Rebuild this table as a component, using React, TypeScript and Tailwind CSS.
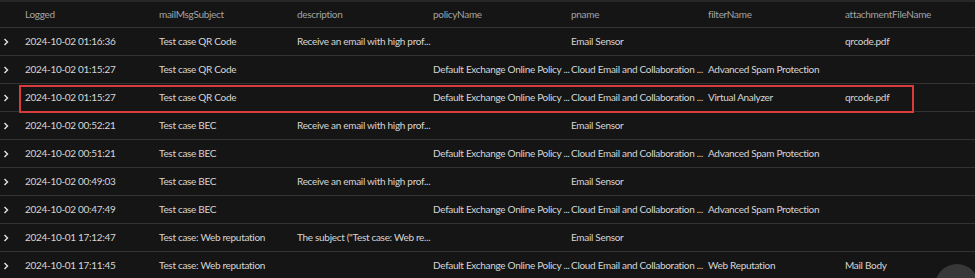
const columns = [
  { key: "logged", label: "Logged", w: "w-[134px]" },
  { key: "subject", label: "mailMsgSubject", w: "w-[138px]" },
  { key: "description", label: "description", w: "w-[136px]" },
  { key: "policy", label: "policyName", w: "w-[138px]" },
  { key: "pname", label: "pname", w: "w-[137px]" },
  { key: "filter", label: "filterName", w: "w-[137px]" },
  { key: "attachment", label: "attachmentFileName", w: "w-[134px]" },
];

type Row = Record<string, string>;

const POLICY = "Default Exchange Online Policy ...";
const CLOUD = "Cloud Email and Collaboration ...";

const rows: Row[] = [
  { logged: "2024-10-02 01:16:36", subject: "Test case QR Code", description: "Receive an email with high prof...", pname: "Email Sensor", attachment: "qrcode.pdf" },
  { logged: "2024-10-02 01:15:27", subject: "Test case QR Code", policy: POLICY, pname: CLOUD, filter: "Advanced Spam Protection" },
  { logged: "2024-10-02 01:15:27", subject: "Test case QR Code", policy: POLICY, pname: CLOUD, filter: "Virtual Analyzer", attachment: "qrcode.pdf" },
  { logged: "2024-10-02 00:52:21", subject: "Test case BEC", description: "Receive an email with high prof...", pname: "Email Sensor" },
  { logged: "2024-10-02 00:51:21", subject: "Test case BEC", policy: POLICY, pname: CLOUD, filter: "Advanced Spam Protection" },
  { logged: "2024-10-02 00:49:03", subject: "Test case BEC", description: "Receive an email with high prof...", pname: "Email Sensor" },
  { logged: "2024-10-02 00:47:49", subject: "Test case BEC", policy: POLICY, pname: CLOUD, filter: "Advanced Spam Protection" },
  { logged: "2024-10-01 17:12:47", subject: "Test case: Web reputation", description: "The subject (\"Test case: Web re...", pname: "Email Sensor" },
  { logged: "2024-10-01 17:11:45", subject: "Test case: Web reputation", policy: POLICY, pname: CLOUD, filter: "Web Reputation", attachment: "Mail Body" },
];

function Chevron() {
  return (
    <svg width="6" height="8" viewBox="0 0 6 8" className="text-[#e6e6e6]">
      <path d="M1.5 1 L4.5 4 L1.5 7" fill="none" stroke="currentColor" strokeWidth="1.4" />
    </svg>
  );
}

export default function App() {
  return (
    <div className="relative w-[975px] h-[278px] overflow-hidden bg-[#151515] font-['Lato',sans-serif] text-[10px] tracking-[-0.3px]">
      <div className="h-[2px] bg-[#262626]" />
      {/* header */}
      <div className="flex h-[26px] items-center border-b border-[#333] text-[#a3a3a3]">
        <div className="w-[21px] shrink-0" />
        {columns.map((c) => (
          <div key={c.key} className={`${c.w} shrink-0 pl-[4px] whitespace-nowrap`}>
            {c.label}
          </div>
        ))}
      </div>

      {rows.map((r, i) => (
        <div key={i} className="relative flex h-[28px] items-center border-b border-[#333] text-[#d6d6d6]">
          <div className="w-[21px] shrink-0 flex items-center pl-[3px]">
            <Chevron />
          </div>
          {columns.map((c) => (
            <div key={c.key} className={`${c.w} shrink-0 pl-[4px] whitespace-nowrap`}>
              {r[c.key] ?? ""}
            </div>
          ))}
          {i === 2 && (
            <div className="absolute left-[19px] top-[1px] w-[895px] h-[28px] border-2 border-[#d83b3b] pointer-events-none" />
          )}
        </div>
      ))}

      {/* floating button peeking in the corner */}
      <div className="absolute left-[935px] top-[264px] w-[44px] h-[44px] rounded-full bg-[#383838]" />
    </div>
  );
}
